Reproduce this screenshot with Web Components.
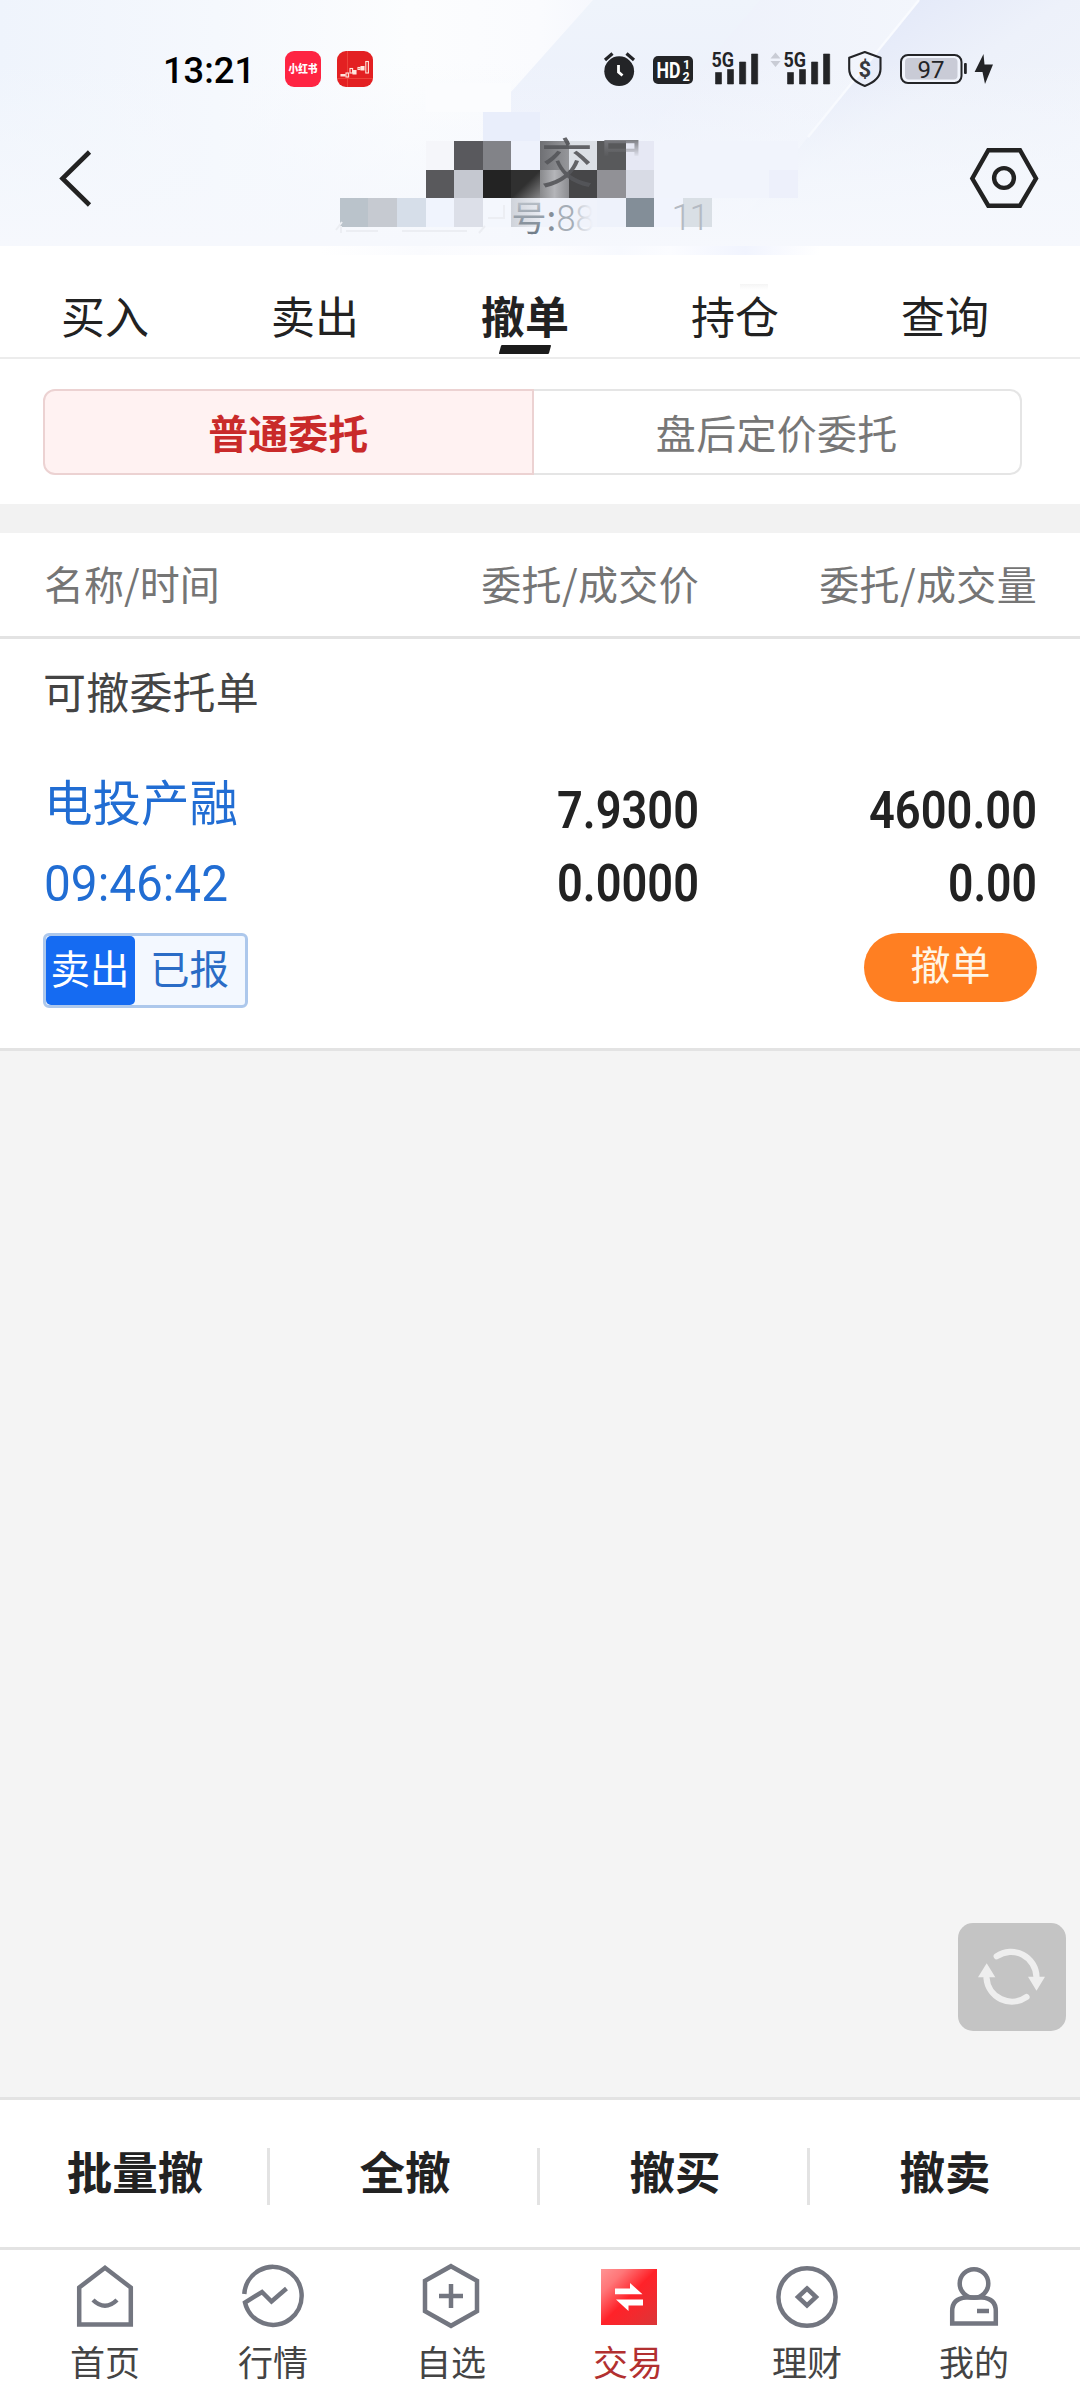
<!DOCTYPE html>
<html lang="zh-CN">
<head>
<meta charset="utf-8">
<title>撤单</title>
<style>
  html, body { margin: 0; padding: 0; }
  body { width: 1080px; height: 2400px; overflow: hidden; background: #f4f4f4; font-family: "Noto Sans CJK SC", "Noto Sans", sans-serif; color: #222; }
</style>
</head>
<body>
<trade-app></trade-app>
<script>
function define(name, html, setup) {
  const tpl = document.createElement('template');
  tpl.innerHTML = html;
  customElements.define(name, class extends HTMLElement {
    constructor() {
      super();
      this.attachShadow({ mode: 'open' }).appendChild(tpl.content.cloneNode(true));
    }
    connectedCallback() { if (setup) setup(this, this.shadowRoot); }
  });
}

define('num-text', `
<style>:host{display:block;flex:none;line-height:0} svg{display:block;overflow:visible} text{font-family:Roboto,"Noto Sans",sans-serif}</style>
<svg><text></text></svg>`, (el, root) => {
  const w = +el.getAttribute('w'), h = +el.getAttribute('h'), s = +el.getAttribute('size');
  const svg = root.querySelector('svg'), t = root.querySelector('text');
  svg.setAttribute('width', w); svg.setAttribute('height', h);
  t.setAttribute('x', 0); t.setAttribute('y', h);
  t.setAttribute('font-size', s);
  t.setAttribute('font-weight', el.getAttribute('weight') || 400);
  t.setAttribute('fill', el.getAttribute('fill') || '#222');
  t.setAttribute('textLength', w); t.setAttribute('lengthAdjust', 'spacingAndGlyphs');
  t.textContent = el.getAttribute('value');
});

define('header-backdrop', `
<style>:host{display:block;width:1080px;height:290px} svg{display:block}</style>
<svg width="1080" height="290" viewBox="0 0 1080 290">
  <defs>
    <linearGradient id="base" x1="0" y1="0" x2="1" y2="0">
      <stop offset="0" stop-color="#eff4fc"/><stop offset=".2" stop-color="#f5f8fd"/><stop offset=".38" stop-color="#fcfdfe"/><stop offset=".5" stop-color="#fafbfe"/><stop offset=".62" stop-color="#f1f4fc"/><stop offset="1" stop-color="#f0f4fb"/>
    </linearGradient>
    <linearGradient id="b1" x1="0" y1="0" x2="0" y2="1"><stop offset="0" stop-color="#eff4fb"/><stop offset=".5" stop-color="#ecf0fb"/><stop offset="1" stop-color="#f1f4fc"/></linearGradient>
    <linearGradient id="b2" x1="0" y1="0" x2="1" y2="0"><stop offset="0" stop-color="#eaeefa"/><stop offset="1" stop-color="#f3f6fc"/></linearGradient>
    <linearGradient id="b3" x1="0" y1="0" x2=".8" y2=".8"><stop offset=".2" stop-color="#e0e6f8"/><stop offset=".6" stop-color="#edf1fa"/><stop offset="1" stop-color="#f1f4fb"/></linearGradient>
    <linearGradient id="fade" x1="0" y1="0" x2="0" y2="1"><stop offset=".25" stop-color="#f5f8fd" stop-opacity="0"/><stop offset=".75" stop-color="#f5f8fd" stop-opacity=".75"/><stop offset="1" stop-color="#f6f8fd"/></linearGradient>
    <linearGradient id="lip" x1="0" y1="0" x2="1" y2="0"><stop offset="0" stop-color="#fff"/><stop offset=".2" stop-color="#fafbfe"/><stop offset=".45" stop-color="#fdfdff"/><stop offset=".6" stop-color="#f7f9fe"/><stop offset=".7" stop-color="#fbfcff"/><stop offset=".85" stop-color="#f1f4fe"/><stop offset="1" stop-color="#fff"/></linearGradient>
    <linearGradient id="smudge" x1="0" y1="0" x2="0" y2="1"><stop offset="0" stop-color="#f5f5f5"/><stop offset="1" stop-color="#fff"/></linearGradient>
    <linearGradient id="g1" x1="0" y1="0" x2="1" y2="0"><stop offset="0" stop-color="#6f7074"/><stop offset="1" stop-color="#96979b"/></linearGradient>
    <linearGradient id="g2" x1="0" y1="0" x2="1" y2="1"><stop offset=".5" stop-color="#303030"/><stop offset="1" stop-color="#858587"/></linearGradient>
    <linearGradient id="g3" x1="0" y1="0" x2="1" y2="0"><stop offset="0" stop-color="#88898c"/><stop offset=".5" stop-color="#b4b5b9"/><stop offset="1" stop-color="#8b8c90"/></linearGradient>
    <linearGradient id="g4" x1="0" y1="0" x2="1" y2="0"><stop offset="0" stop-color="#cfd3da"/><stop offset="1" stop-color="#e8ebf2"/></linearGradient>
  </defs>
  <rect width="1080" height="290" fill="#fff"/>
  <rect width="1080" height="246" fill="url(#base)"/>
  <path d="M593 0H920L808 140 722 246H511V92Z" fill="url(#b1)"/>
  <path d="M760 0H919L808 137 720 246H550L643 137Z" fill="url(#b2)"/>
  <path d="M919 0H1080V246H722L808 137Z" fill="url(#b3)"/>
  <path d="M919 0 808 137" stroke="#f9fbff" stroke-width="2.400"/>
  <rect width="1080" height="246" fill="url(#fade)"/>
  <rect x="320" y="246" width="500" height="9" fill="url(#lip)"/>
  <rect x="740" y="284" width="28" height="6" fill="url(#smudge)"/>
  <g shape-rendering="crispEdges">
    <path d="M426 83h85v29h-85z" fill="#fbfcfe"/>
    <path d="M483 112h57v29h-57z" fill="#e9eefb"/>
    <path d="M426 141h28v29h-28z" fill="#f5f6fa"/><path d="M454 141h29v29h-29z" fill="#59595d"/><path d="M483 141h28v29h-28z" fill="#828388"/><path d="M511 141h29v29h-29z" fill="#eef2fc"/>
    <path d="M540 141h29v29h-29z" fill="url(#g1)"/><path d="M569 141h28v29h-28z" fill="#dce0e6"/><path d="M597 141h29v29h-29z" fill="#58595b"/><path d="M626 141h28v29h-28z" fill="#e6e8f4"/>
    <path d="M426 170h28v28h-28z" fill="#59595c"/><path d="M454 170h29v28h-29z" fill="#c5c8d0"/><path d="M483 170h28v28h-28z" fill="#232323"/><path d="M511 170h29v28h-29z" fill="url(#g2)"/>
    <path d="M540 170h29v28h-29z" fill="url(#g3)"/><path d="M569 170h28v28h-28z" fill="#464648"/><path d="M597 170h29v28h-29z" fill="#919196"/><path d="M626 170h28v28h-28z" fill="#d8dbe5"/>
    <path d="M654 141h144v29H654zM654 170h115v28H654z" fill="#f1f4fc"/><path d="M769 170h29v28h-29z" fill="#edf0fb"/>
    <path d="M340 198h28v29h-28z" fill="#bac3cb"/><path d="M368 198h29v29h-29z" fill="#c6cad1"/><path d="M397 198h29v29h-29z" fill="#d6dee9"/><path d="M426 198h28v29h-28z" fill="#f0f4fd"/><path d="M454 198h29v29h-29z" fill="#dcdfe8"/><path d="M483 198h28v29h-28z" fill="#f4f7fd"/>
    <path d="M511 198h29v29h-29z" fill="url(#g4)"/><path d="M540 198h57v29h-57z" fill="#f0f3fb"/><path d="M597 198h29v29h-29z" fill="#eef2fb"/><path d="M626 198h28v29h-28z" fill="#838e98"/><path d="M654 198h29v29h-29z" fill="#f1f4fd"/><path d="M683 198h29v29h-29z" fill="#d9dfe5"/>
  </g>
  <path d="M346 231H378M402 231H467M342 222 336 230M341 226V233M485 226 479 233M504 205V218H488" stroke="#eceef3" stroke-width="2" fill="none"/>
</svg>`);

define('status-bar', `
<style>
  :host{display:flex;align-items:center;height:138px;box-sizing:border-box;padding:0 86px 0 163px}
  .apps{display:flex;gap:16px;margin-left:30px}
  .sys{margin-left:auto}
  svg{display:block}
  text{font-family:Roboto,"Noto Sans CJK SC",sans-serif}
</style>
<num-text value="13:21" w="92" h="27" size="37.500" weight="500" fill="#000"></num-text>
<div class="apps">
  <svg width="36" height="36" viewBox="0 0 36 36"><rect width="36" height="36" rx="9" fill="#fe2442"/><text x="18" y="22.400" text-anchor="middle" font-size="11" font-weight="900" fill="#fff" textLength="29" lengthAdjust="spacingAndGlyphs" style="font-family:'Noto Sans CJK SC',sans-serif">小红书</text></svg>
  <svg width="36" height="36" viewBox="0 0 36 36"><rect width="36" height="36" rx="9" fill="#e32022"/><path d="M10.500 0V36M0 27.500H36" stroke="#f04a40" stroke-width=".8"/><g stroke="#ffe6dc" fill="none" stroke-width="1.100"><path d="M4 25V23.500H8V25Z" fill="#ffe6dc"/><rect x="9" y="22" width="2.600" height="4"/><rect x="13" y="17.500" width="2.600" height="4.500"/><path d="M16 19.500H19V23H16Z" fill="#ffe6dc"/><rect x="21" y="16.500" width="2" height="2"/><path d="M24 15.500H27V19H24Z" fill="#ffe6dc"/><rect x="28.800" y="10.500" width="2.600" height="11.500"/></g></svg>
</div>
<svg class="sys" width="392" height="40" viewBox="602 49 392 40">
  <g fill="#232427">
    <circle cx="619.200" cy="71.200" r="14.900"/>
    <path d="M605 60 612.500 53.500M626.500 53.500 634 60" stroke="#232427" stroke-width="3.200"/>
    <path d="M618.500 65V72L622.500 75.500" fill="none" stroke="#fff" stroke-width="2.800"/>
    <rect x="653" y="56" width="40" height="28" rx="5"/>
    <text x="656.500" y="78" font-size="22" font-weight="700" fill="#fff" textLength="24" lengthAdjust="spacingAndGlyphs">HD</text>
    <text x="683" y="68.500" font-size="12.500" font-weight="700" fill="#fff">1</text>
    <text x="682.500" y="81" font-size="12.500" font-weight="700" fill="#fff">2</text>
    <text x="711.500" y="67" font-size="20.500" font-weight="700" textLength="22.500" lengthAdjust="spacingAndGlyphs">5G</text>
    <path d="M715.500 72.500h6V84h-6zM727.500 69.500h6V84h-6zM739.500 62h6.200V84h-6.200zM751.500 54h6.200V84h-6.200z" stroke="#232427" stroke-width=".6" stroke-linejoin="round"/>
    <text x="783.500" y="67" font-size="20.500" font-weight="700" textLength="22.500" lengthAdjust="spacingAndGlyphs">5G</text>
    <path d="M787.500 72.500h6V84h-6zM799.500 69.500h6V84h-6zM811.500 62h6.200V84h-6.200zM823.500 54h6.200V84h-6.200z" stroke="#232427" stroke-width=".6" stroke-linejoin="round"/>
    <path d="M770.500 58.500 775.500 52.500 780.500 58.500ZM770.500 61 775.500 67 780.500 61Z" fill="#c9ccd5"/>
    <path d="M864.800 52 880.500 57.800V69Q880.500 80 864.800 86Q849.200 80 849.200 69V57.800Z" fill="none" stroke="#232427" stroke-width="2.100" stroke-linejoin="round"/>
    <text x="864.900" y="77" font-size="22" font-weight="700" text-anchor="middle" fill="#38393e">$</text>
    <rect x="901" y="55" width="60.500" height="28" rx="7" fill="#f1f4fc" stroke="#232427" stroke-width="2"/>
    <rect x="905" y="58" width="52.500" height="21.500" rx="4" fill="#c9cbd6"/>
    <rect x="964" y="63" width="2.800" height="11" rx="1"/>
    <text x="917.500" y="78" font-size="24.500" textLength="27" lengthAdjust="spacingAndGlyphs">97</text>
    <path d="M983.500 54 974.600 72H982.500L985 84 993 64.500H984.500Z"/>
  </g>
</svg>`);

define('title-bar', `
<style>
  :host{display:flex;height:108px}
  svg{display:block}
  .gear{margin-left:auto}
  .title{margin-left:251px}
  .t{font-family:"Noto Sans CJK SC",sans-serif}
  .n{font-family:Roboto,"Noto Sans",sans-serif;font-weight:300}
</style>
<svg width="120" height="108" viewBox="0 138 120 108"><path d="M89.500 152 62.500 178.500 89.500 205" fill="none" stroke="#222" stroke-width="4.600"/></svg>
<svg class="title" width="420" height="108" viewBox="371 138 420 108" overflow="visible">
  <defs>
    <linearGradient id="y" gradientUnits="userSpaceOnUse" x1="0" y1="139" x2="0" y2="157"><stop offset="0" stop-color="#77787d"/><stop offset="1" stop-color="#77787d" stop-opacity="0"/></linearGradient>
    <linearGradient id="n" gradientUnits="userSpaceOnUse" x1="0" y1="202" x2="0" y2="234"><stop offset="0" stop-color="#b8bfc7"/><stop offset="1" stop-color="#707c88"/></linearGradient>
    <linearGradient id="e" gradientUnits="userSpaceOnUse" x1="575" y1="0" x2="592" y2="0"><stop offset="0" stop-color="#c0c5cd"/><stop offset="1" stop-color="#eef1f9"/></linearGradient>
    <clipPath id="top"><rect x="598" y="134" width="50" height="22"/></clipPath>
  </defs>
  <text class="t" x="540.500" y="182.500" font-size="53" fill="#55565a" opacity=".9">交</text>
  <text class="t" x="594.500" y="182.500" font-size="53" fill="url(#y)" clip-path="url(#top)">易</text>
  <text class="t" x="511.500" y="231" font-size="35" fill="url(#n)">号</text>
  <text class="t" x="546.500" y="231" font-size="35" fill="#858f9a">:</text>
  <text class="n" x="556.500" y="230.500" font-size="36" fill="#a5adb6" textLength="19" lengthAdjust="spacingAndGlyphs">8</text>
  <text class="n" x="575.500" y="230.500" font-size="36" fill="url(#e)" textLength="19" lengthAdjust="spacingAndGlyphs">8</text>
  <text class="n" x="671.500" y="230" font-size="36" fill="#b4bac3" textLength="38">11</text>
</svg>
<svg class="gear" width="120" height="108" viewBox="960 138 120 108"><path d="M988.300 150.200H1020L1036 178.500 1020 205.700H988.300L972.300 178.500Z" fill="none" stroke="#222" stroke-width="4.400"/><circle cx="1004" cy="178" r="9.900" fill="none" stroke="#222" stroke-width="4.400"/></svg>`);

define('app-header', `
<style>:host{display:grid;height:246px} header-backdrop,.front{grid-area:1/1} .front{display:flex;flex-direction:column;z-index:1}</style>
<header-backdrop></header-backdrop>
<div class="front"><status-bar></status-bar><title-bar></title-bar></div>`);

define('tab-item', `
<style>
  :host{display:flex;flex-direction:column;align-items:center;width:210px;height:111px;font-size:44px;line-height:64px;box-sizing:border-box;padding-top:37px;color:#222}
  :host([active]){font-weight:700}
  i{display:none;width:50px;height:9px;margin-top:-2px;background:#1b1b1b;transform:skewX(-15deg);border-radius:1px}
  :host([active]) i{display:block}
</style><span><slot></slot></span><i></i>`);

define('tab-row', `
<style>:host{display:flex;height:111px;border-bottom:2px solid #ececec}</style>
<tab-item>买入</tab-item><tab-item>卖出</tab-item><tab-item active>撤单</tab-item><tab-item>持仓</tab-item><tab-item>查询</tab-item>`);

define('segment-control', `
<style>
  :host{display:flex;height:145px;box-sizing:border-box;padding:30px 58px 29px 43px;font-size:40px}
  div{flex:1 1 0;display:flex;align-items:center;justify-content:center;box-sizing:border-box;border:2px solid #e5e5e5;padding-bottom:1px}
  .on{background:#fff2f2;color:#c92a2a;border-color:#ecd2d2;border-radius:12px 0 0 12px;font-weight:700}
  .off{color:#777;border-left:0;border-radius:0 12px 12px 0;letter-spacing:.3px}
</style>
<div class="on">普通委托</div><div class="off">盘后定价委托</div>`);

define('list-head', `
<style>
  :host{display:grid;grid-template-columns:1fr 339px 338px;align-items:center;height:106px;box-sizing:border-box;padding:0 43px 4px 44px;border-bottom:3px solid #e3e3e3;font-size:40px;letter-spacing:.35px;color:#757575}
  span:first-of-type{letter-spacing:0}
  span+span{text-align:right}
</style><span>名称/时间</span><span>委托/成交价</span><span>委托/成交量</span>`);

define('order-tag', `
<style>
  :host{display:flex;width:205px;height:75px;box-sizing:border-box;border:3px solid #adc8ec;border-radius:6px;background:#f3f8ff;font-size:39.5px;line-height:62px}
  b{font-weight:400;width:89px;background:#156bf2;color:#fff;border-radius:5px;text-align:center;text-indent:-1px}
  span{flex:1;color:#2a6cc6;text-align:center;text-indent:-1px}
</style><b>卖出</b><span>已报</span>`);

define('cancel-button', `
<style>:host{display:block;width:173px;height:69px;border-radius:35px;background:#ff7f22;color:#fff6e6;font-size:40px;line-height:60px;text-align:center}</style><slot></slot>`);

define('order-row', `
<style>
  :host{display:grid;grid-template-columns:260px 1fr 338px;height:283px;box-sizing:border-box;padding:3px 43px 0}
  .l,.m,.r{display:flex;flex-direction:column}
  .name{font-size:48.5px;line-height:64px;color:#216dd3;margin:0 0 0 1px;height:69px}
  .time{margin:29px 0 32px 1px}
  .m,.r{align-items:flex-end}
  .a{margin-top:23px}.b{margin:36px 0 32px}
</style>
<div class="l"><div class="name">电投产融</div><num-text class="time" value="09:46:42" w="184" h="35" size="49.500" fill="#216dd3"></num-text><order-tag></order-tag></div>
<div class="m"><num-text class="a" value="7.9300" w="142" h="37" size="52" weight="600"></num-text><num-text class="b" value="0.0000" w="142" h="37" size="52" weight="600"></num-text></div>
<div class="r"><num-text class="a" value="4600.00" w="168" h="37" size="52" weight="600"></num-text><num-text class="b" value="0.00" w="89" h="37" size="52" weight="600"></num-text><cancel-button>撤单</cancel-button></div>`);

define('order-list', `
<style>
  :host{display:block;background:#fff;height:409px;border-bottom:3px solid #e3e3e3}
  h3{margin:0;padding:19px 0 0 43px;height:107px;font-size:43px;line-height:64px;font-weight:400;color:#444;letter-spacing:.2px}
</style><h3>可撤委托单</h3><order-row></order-row>`);

define('refresh-button', `
<style>:host{display:block;width:108px;height:108px;border-radius:15px;background:#c4c4c4} svg{display:block}</style>
<svg width="108" height="108" fill="none" stroke="#eee" stroke-width="6.200" stroke-linecap="round"><path d="M38.700 33.300A25.500 25.500 0 0 1 78.500 54"/><path d="M28.500 55A25.500 25.500 0 0 0 68.500 74"/><path d="M70 53.700H87L78.500 67.700ZM20 54.300H37.300L28.700 40.300Z" fill="#eee" stroke="none"/></svg>`);

define('action-bar', `
<style>
  :host{display:flex;align-items:center;height:147px;background:#fff;border-top:3px solid #e3e3e3;border-bottom:3px solid #e3e3e3;font-size:45.5px;font-weight:600;color:#222}
  span{width:270px;box-sizing:border-box;height:57px;line-height:45px;margin-top:6px;text-align:center;text-indent:3px}
  span:not(:last-of-type){border-right:3px solid #e3e3e3}
  span:last-of-type{text-indent:0}
</style><span>批量撤</span><span>全撤</span><span>撤买</span><span>撤卖</span>`);

const icons = {
  home: '<path d="M6.200 24.500 32 4.800 57.800 24.500V61.500H6.200Z"/><path d="M20 37Q32 48.500 44 37"/>',
  market: '<path d="M3.300 31A28.700 29 0 1 1 4 39.500L21 29 30.500 38.500 45.500 25.500"/>',
  plus: '<path d="M32 3.200 58 17.800V48.200L32 62.800 6 48.200V17.800ZM32 21V45M20 33H44"/>',
  trade: '<defs><linearGradient id="r" x1="0" y1="0" x2="1" y2="1"><stop offset="0" stop-color="#ff9494"/><stop offset=".22" stop-color="#ff7678"/><stop offset=".5" stop-color="#ff2229"/><stop offset=".7" stop-color="#f3292e"/><stop offset="1" stop-color="#da3638"/></linearGradient></defs><rect x="5" y="6" width="56" height="56" fill="url(#r)" stroke="none"/><path d="M19 25.500H34V20L46.500 31.300H19ZM47 36.500V42.500H32.500V48L20 36.500Z" fill="#fff" stroke="none"/>',
  coin: '<ellipse cx="32" cy="34" rx="28.600" ry="28.800"/><path d="M32 25.500 41 34 32 42.500 23 34Z"/>',
  user: '<circle cx="32" cy="20.500" r="14.300"/><path d="M10.200 60.500V48Q10.200 35.500 24 34.500H40Q53.800 35.500 53.800 48V60.500Z"/><path d="M35 48H47"/>'
};
define('nav-item', `
<style>
  :host{display:flex;flex-direction:column;align-items:center;flex:none;font-size:35px;color:#444}
  svg{display:block;margin-top:13px}
  span{line-height:50px;margin-top:7px}
  :host([active]){color:#b23030}
</style><svg width="64" height="66" viewBox="0 0 64 66" fill="none" stroke="#737680" stroke-width="4.500"></svg><span><slot></slot></span>`, (el, root) => {
  root.querySelector('svg').innerHTML = icons[el.getAttribute('icon')];
  el.style.width = el.getAttribute('w') + 'px';
});

define('nav-bar', `
<style>:host{display:flex;height:150px;background:#fff;box-sizing:border-box;padding-left:16px}</style>
<nav-item icon="home" w="178">首页</nav-item><nav-item icon="market" w="158">行情</nav-item><nav-item icon="plus" w="198">自选</nav-item><nav-item icon="trade" w="156" active>交易</nav-item><nav-item icon="coin" w="202">理财</nav-item><nav-item icon="user" w="132">我的</nav-item>`);

define('trade-app', `
<style>
  :host{display:flex;flex-direction:column;width:1080px;height:2400px}
  .panel{background:#fff}
  .gap{height:29px;background:#f2f2f2}
  .blank{flex:1;background:#f4f4f4;display:flex;justify-content:flex-end;align-items:flex-end;padding:0 14px 66px 0}
</style>
<div class="panel"><app-header></app-header><tab-row></tab-row><segment-control></segment-control><div class="gap"></div><list-head></list-head></div>
<order-list></order-list>
<div class="blank"><refresh-button></refresh-button></div>
<action-bar></action-bar><nav-bar></nav-bar>`);
</script>
</body>
</html>
